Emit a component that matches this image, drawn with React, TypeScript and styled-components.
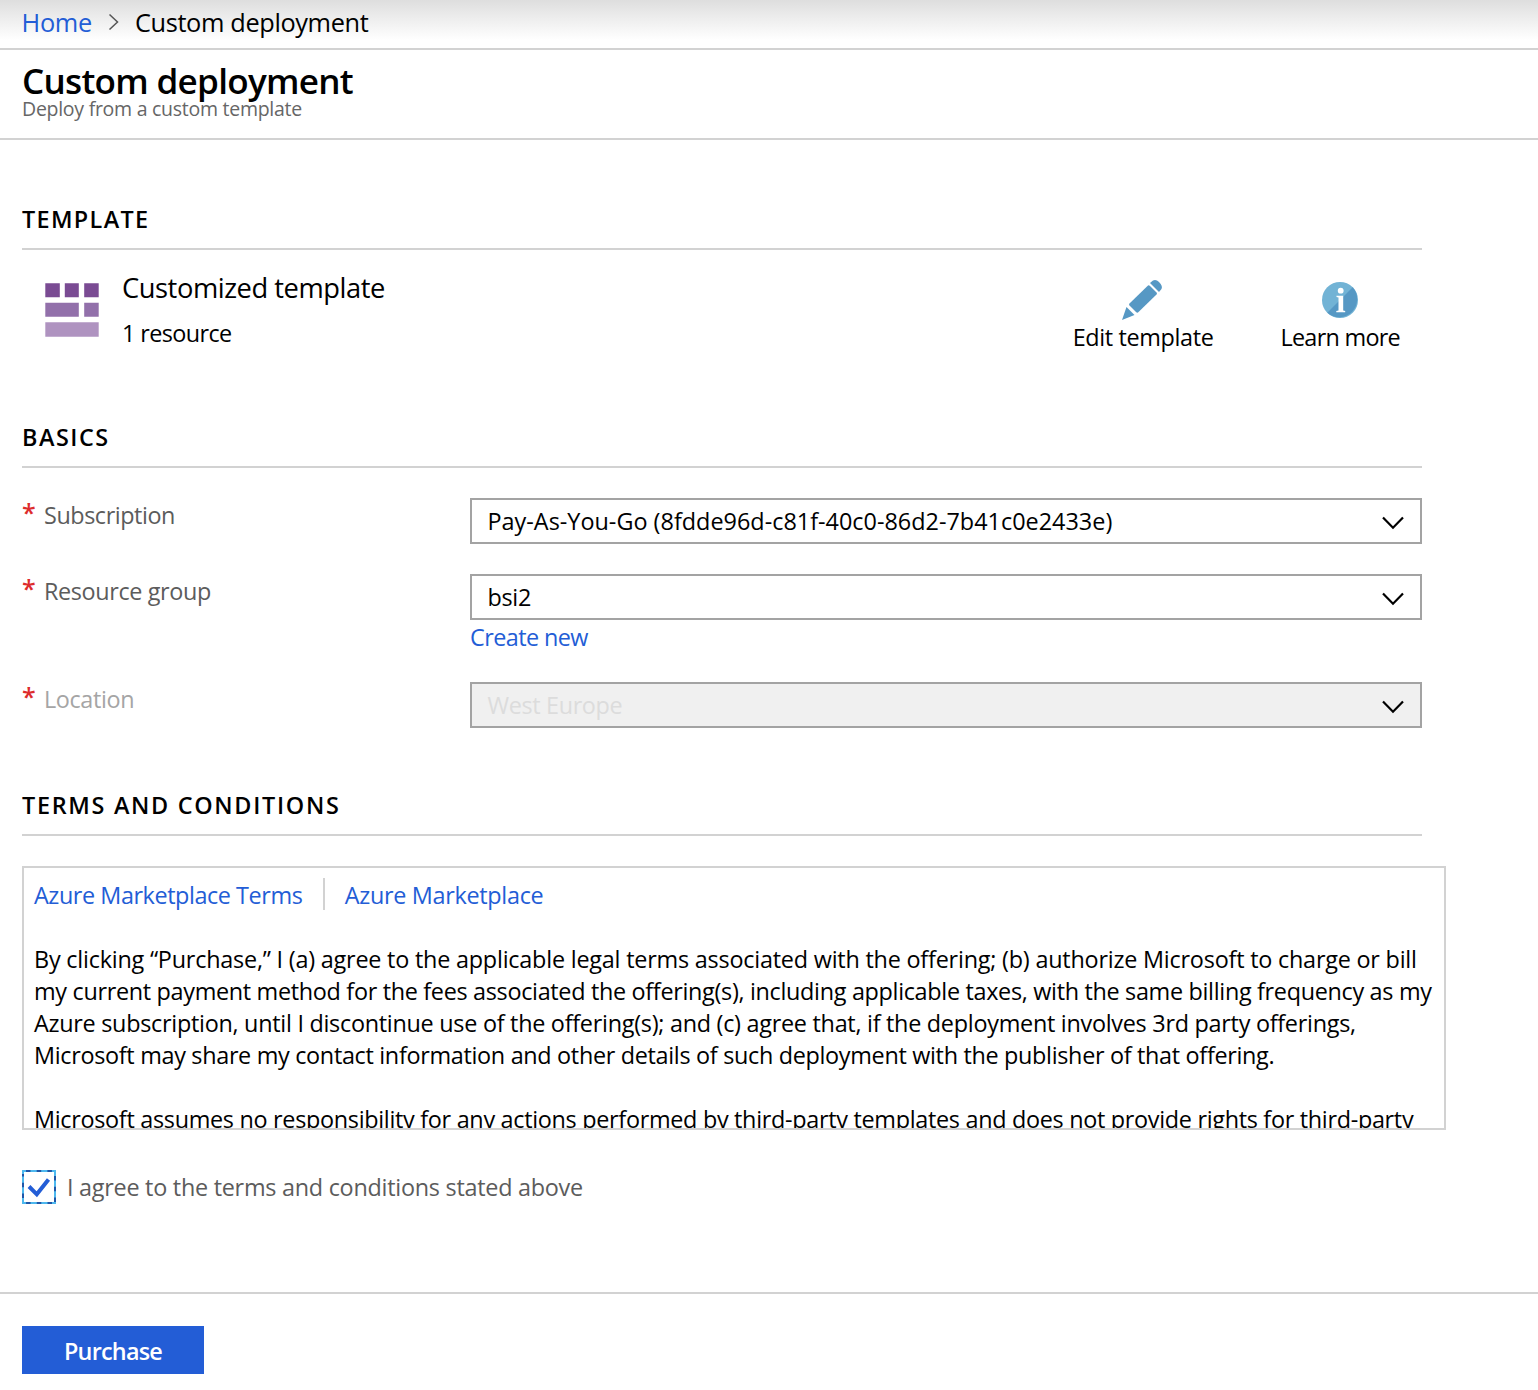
import React from "react";
import styled, { createGlobalStyle } from "styled-components";

const GlobalStyle = createGlobalStyle`
  *, *::before, *::after { box-sizing: border-box; }
  body {
    margin: 0;
    background: #fff;
    color: #000;
    font-family: "Open Sans", "Noto Sans", sans-serif;
    font-size: 23.4px;
    line-height: 32px;
  }
`;

const Page = styled.div`
  width: 1538px;
  height: 1390px;
  display: flex;
  flex-direction: column;
  overflow: hidden;
`;

const Track = styled.span<{ $ls: number }>`
  letter-spacing: ${(p) => p.$ls}px;
  white-space: nowrap;
`;

const Breadcrumb = styled.nav`
  height: 50px;
  padding-left: 21.5px;
  display: flex;
  border-bottom: 2px solid #d2d2d2;
  background: linear-gradient(#dedede, #fff 40px);
  font-size: 25.35px;
  line-height: 44px;
`;

const CrumbArrow = styled.svg`
  width: 12px;
  height: 18px;
  margin: 13px 15px 0 16px;
`;

const Link = styled.a`
  color: #235dd6;
  text-decoration: none;
`;

const TitleBar = styled.header`
  height: 90px;
  padding: 10px 0 0 22px;
  border-bottom: 2px solid #d2d2d2;
`;

const Title = styled.h1`
  margin: 0;
  font-size: 35.1px;
  font-weight: 600;
  line-height: 40px;
`;

const Subtitle = styled.p`
  margin: 0;
  color: #666;
  font-size: 19.5px;
  line-height: 18px;
`;

const Content = styled.main`
  flex: 1;
  padding: 63px 0 0 22px;
`;

const Section = styled.section<{ $height: number }>`
  width: 1400px;
  height: ${(p) => p.$height}px;
`;

const Heading = styled.h2`
  margin: 0;
  height: 47px;
  border-bottom: 2px solid #d2d2d2;
  font-size: 23.4px;
  font-weight: 600;
`;

const TemplateRow = styled.div`
  display: flex;
  padding: 20px 22px 0 22px;
`;

const TemplateIcon = styled.svg`
  width: 56px;
  height: 56px;
  margin-top: 12px;
`;

const TemplateInfo = styled.div`
  flex: 1;
  padding-left: 22px;
`;

const TemplateName = styled.div`
  font-size: 27.3px;
  line-height: 36px;
`;

const ResourceCount = styled.div`
  margin-top: 11px;
`;

const Action = styled.div<{ $gap?: number }>`
  display: flex;
  flex-direction: column;
  align-items: center;
  margin-left: ${(p) => p.$gap ?? 0}px;
  padding-top: 8px;
`;

const ActionIcon = styled.svg`
  width: 44px;
  height: 43px;
`;

const Field = styled.div<{ $height: number }>`
  display: grid;
  grid-template-columns: 22px 426px 952px;
  height: ${(p) => p.$height}px;
`;

const Fields = styled.div`
  padding-top: 30px;
`;

const Star = styled.span`
  color: #dd2c2c;
  font-size: 25px;
  font-weight: 600;
  line-height: 29px;
`;

const Label = styled.label<{ $disabled?: boolean }>`
  padding-top: 1px;
  color: ${(p) => (p.$disabled ? "#a5a5a5" : "#5c5c5c")};
`;

const Select = styled.div<{ $disabled?: boolean }>`
  display: flex;
  justify-content: space-between;
  align-items: flex-start;
  height: 46px;
  padding: 5px 16px 0 15.5px;
  border: 2px solid #a3a3a3;
  background: ${(p) => (p.$disabled ? "#f0f0f0" : "#fff")};
  color: ${(p) => (p.$disabled ? "#dcdcdc" : "#000")};
`;

const Chevron = styled.svg`
  width: 22px;
  height: 14px;
  margin-top: 11px;
`;

const CreateNew = styled.div`
  margin-top: 1px;
`;

const TermsBox = styled.div`
  width: 1424px;
  height: 264px;
  margin-top: 30px;
  padding: 10px 0 0 10px;
  border: 2px solid #d2d2d2;
  overflow: hidden;
`;

const TermsLinks = styled.div`
  display: flex;
  height: 65px;
  line-height: 34px;
`;

const Separator = styled.span`
  width: 2px;
  height: 32px;
  margin: 0 20px 0 20.5px;
  background: #d2d2d2;
`;

const Paragraph = styled.p`
  margin: 0 0 32px;
`;

const Line = styled.span<{ $ls: number }>`
  display: block;
  letter-spacing: ${(p) => p.$ls}px;
  white-space: nowrap;
`;

const Agree = styled.label`
  display: flex;
  margin-top: 40px;
  color: #5c5c5c;
  gap: 11px;
`;

const CheckIcon = styled.svg`
  width: 34px;
  height: 34px;
`;

const AgreeText = styled.span`
  padding-top: 1px;
`;

const Footer = styled.footer`
  height: 98px;
  padding: 32px 0 0 22px;
  border-top: 2px solid #d2d2d2;
`;

const Purchase = styled.button`
  display: block;
  width: 182px;
  height: 48px;
  padding: 2px 0 0;
  border: 0;
  background: #235dd6;
  color: #fff;
  font: 600 23.4px/32px "Open Sans", "Noto Sans", sans-serif;
`;

const SelectArrow = () => (
  <Chevron viewBox="0 0 22 14">
    <path d="M1 1.5 11 11.7 21 1.5" fill="none" stroke="#000" strokeWidth="2.2" />
  </Chevron>
);

const terms: { text: string; ls: number }[][] = [
  [
    { text: "By clicking “Purchase,” I (a) agree to the applicable legal terms associated with the offering; (b) authorize Microsoft to charge or bill", ls: -0.213 },
    { text: "my current payment method for the fees associated the offering(s), including applicable taxes, with the same billing frequency as my", ls: -0.315 },
    { text: "Azure subscription, until I discontinue use of the offering(s); and (c) agree that, if the deployment involves 3rd party offerings,", ls: -0.274 },
    { text: "Microsoft may share my contact information and other details of such deployment with the publisher of that offering.", ls: -0.314 },
  ],
  [
    { text: "Microsoft assumes no responsibility for any actions performed by third-party templates and does not provide rights for third-party", ls: -0.303 },
  ],
];

export default function App() {
  return (
    <Page>
      <GlobalStyle />
      <Breadcrumb>
        <Link><Track $ls={-0.3}>Home</Track></Link>
        <CrumbArrow viewBox="0 0 12 18">
          <path d="M1.5 1.5 9.5 9 1.5 16.5" fill="none" stroke="#555" strokeWidth="1.5" />
        </CrumbArrow>
        <Track $ls={-0.37}>Custom deployment</Track>
      </Breadcrumb>
      <TitleBar>
        <Title><Track $ls={-0.72}>Custom deployment</Track></Title>
        <Subtitle><Track $ls={-0.27}>Deploy from a custom template</Track></Subtitle>
      </TitleBar>
      <Content>
        <Section $height={218}>
          <Heading><Track $ls={1.344}>TEMPLATE</Track></Heading>
          <TemplateRow>
            <TemplateIcon viewBox="0 0 56 56">
              <path d="M1.300 1.300h14.500v14H1.300zM20.800 1.300h14v14h-14zM40.200 1.300h14.500v14H40.200z" fill="#7a4b93" />
              <path d="M1.300 20.800h33.500v14H1.300zM40.200 20.800h14.500v14H40.200z" fill="#9270aa" />
              <path d="M1.300 40.200h53.400v14.500H1.300z" fill="#af93c0" />
            </TemplateIcon>
            <TemplateInfo>
              <TemplateName><Track $ls={-0.44}>Customized template</Track></TemplateName>
              <ResourceCount><Track $ls={-0.6}>1 resource</Track></ResourceCount>
            </TemplateInfo>
            <Action>
              <ActionIcon viewBox="0 0 44 43">
                <g fill="#5698c4">
                  <path d="M1 42 5.500 29 13.500 37z" />
                  <path d="M8.500 25.500 27 7.500Q28 7 29 8L35.500 14.500Q36.500 15.500 35.500 16.500L17 34.500Q16 35 15 34L8.500 27.500Q7.500 26.500 8.500 25.500z" />
                  <path d="M29 5 32 2.500Q35 1 38 4Q42 8 40.500 11L38 14z" />
                </g>
              </ActionIcon>
              <Track $ls={-0.36}>Edit template</Track>
            </Action>
            <Action $gap={67}>
              <ActionIcon viewBox="0 0 44 43">
                <circle cx="22" cy="22" r="18" fill="#72b3d5" />
                <path d="M34.700 9.300A18 18 0 0 1 9.300 34.700z" fill="#5698c4" />
                <circle cx="22.700" cy="12.700" r="2.900" fill="#fff" />
                <path d="M18.500 17.800h6.700v14.700l2 .5v1.200h-8.900V33l2.200-.5V19.400l-2-.4z" fill="#fff" />
              </ActionIcon>
              <Track $ls={-0.72}>Learn more</Track>
            </Action>
          </TemplateRow>
        </Section>
        <Section $height={368}>
          <Heading><Track $ls={1.5}>BASICS</Track></Heading>
          <Fields>
            <Field $height={76}>
              <Star>*</Star>
              <Label><Track $ls={-0.44}>Subscription</Track></Label>
              <Select>
                <Track $ls={0.01}>Pay-As-You-Go (8fdde96d-c81f-40c0-86d2-7b41c0e2433e)</Track>
                <SelectArrow />
              </Select>
            </Field>
            <Field $height={108}>
              <Star>*</Star>
              <Label><Track $ls={-0.37}>Resource group</Track></Label>
              <div>
                <Select>
                  <Track $ls={-0.3}>bsi2</Track>
                  <SelectArrow />
                </Select>
                <CreateNew><Link><Track $ls={-0.57}>Create new</Track></Link></CreateNew>
              </div>
            </Field>
            <Field $height={46}>
              <Star>*</Star>
              <Label $disabled><Track $ls={-0.38}>Location</Track></Label>
              <Select $disabled>
                <Track $ls={-0.358}>West Europe</Track>
                <SelectArrow />
              </Select>
            </Field>
          </Fields>
        </Section>
        <Section $height={400}>
          <Heading><Track $ls={1.7}>TERMS AND CONDITIONS</Track></Heading>
          <TermsBox>
            <TermsLinks>
              <Link><Track $ls={-0.43}>Azure Marketplace Terms</Track></Link>
              <Separator />
              <Link><Track $ls={-0.31}>Azure Marketplace</Track></Link>
            </TermsLinks>
            {terms.map((lines, i) => (
              <Paragraph key={i}>
                {lines.map((l) => <Line key={l.text} $ls={l.ls}>{l.text}</Line>)}
              </Paragraph>
            ))}
          </TermsBox>
          <Agree>
            <CheckIcon viewBox="0 0 34 34">
              <rect x="1" y="1" width="32" height="32" fill="#fff" stroke="#4db8ee" strokeWidth="2" />
              <path d="M4 1H34M33 6V34M30 33H0M1 28V4" fill="none" stroke="#1f56a8" strokeWidth="2" strokeDasharray="4.500 6.200" />
              <path d="M7 16.500 14.800 24.300 26.500 9.500" fill="none" stroke="#235dd6" strokeWidth="4" />
            </CheckIcon>
            <AgreeText><Track $ls={-0.262}>I agree to the terms and conditions stated above</Track></AgreeText>
          </Agree>
        </Section>
      </Content>
      <Footer>
        <Purchase><Track $ls={-0.78}>Purchase</Track></Purchase>
      </Footer>
    </Page>
  );
}
